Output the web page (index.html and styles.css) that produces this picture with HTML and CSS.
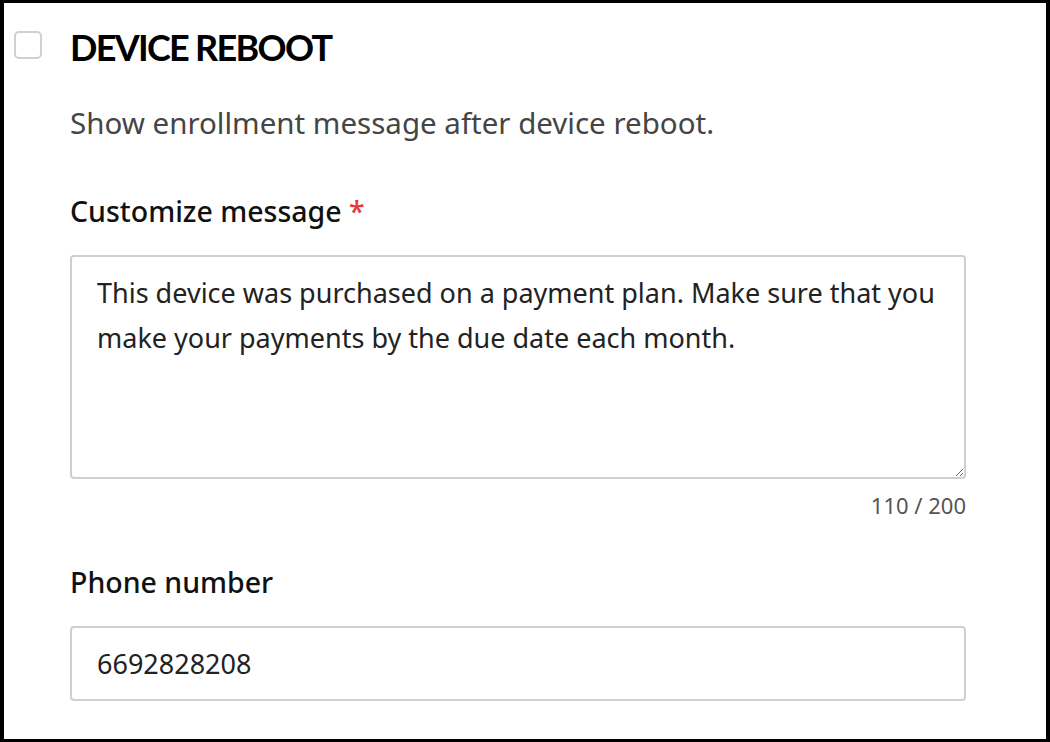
FILE: index.html
```html
<!DOCTYPE html>
<html lang="en">
<head>
<meta charset="utf-8">
<title>Device reboot</title>
<link rel="stylesheet" href="styles.css">
</head>
<body>
<div class="frame">
  <div class="header">
    <span class="checkbox"></span>
    <h1 class="title">DEVICE REBOOT</h1>
  </div>
  <div class="content">
    <p class="desc">Show enrollment message after device reboot.</p>
    <label class="label">Customize message <span class="req">*</span></label>
    <textarea class="textarea">This device was purchased on a payment plan. Make sure that you make your payments by the due date each month.</textarea>
    <div class="counter">110 / 200</div>
    <label class="label label-phone">Phone number</label>
    <input class="input" type="text" value="6692828208">
  </div>
</div>
</body>
</html>
```

FILE: styles.css
```css
html, body {
  margin: 0;
  padding: 0;
  background: #fff;
}
.frame {
  box-sizing: border-box;
  width: 1050px;
  height: 742px;
  border-style: solid;
  border-color: #000;
  border-width: 3px 4px 3px 4px;
  padding: 0 80px 0 10px;
  overflow: hidden;
  font-family: "Noto Sans", "Open Sans", sans-serif;
}
.header {
  display: flex;
  align-items: flex-start;
  gap: 28px;
  padding-top: 22px;
}
.checkbox {
  flex: none;
  box-sizing: border-box;
  width: 28px;
  height: 28px;
  margin-top: 6px;
  border: 2px solid #d0d0d0;
  border-radius: 5px;
  background: #fff;
}
.title {
  margin: 0;
  font-family: "Lato", sans-serif;
  font-weight: 700;
  font-size: 36px;
  line-height: 44px;
  color: #000;
  letter-spacing: -1.7px;
}
.content {
  display: flex;
  flex-direction: column;
  padding-left: 56px;
}
.desc {
  margin: 34px 0 0;
  font-size: 29.5px;
  line-height: 40px;
  color: #454545;
}
.label {
  margin-top: 50px;
  font-size: 28.5px;
  line-height: 36px;
  font-weight: 500;
  color: #111;
}
.req {
  color: #e8373a;
}
.textarea {
  box-sizing: border-box;
  margin-top: 26px;
  width: 896px;
  height: 224px;
  padding: 13px 25px;
  border: 2px solid #cfcfcf;
  border-radius: 4px;
  font-family: inherit;
  font-size: 27px;
  line-height: 45px;
  color: #222;
  resize: vertical;
  outline: none;
}
.counter {
  margin-top: 11px;
  text-align: right;
  font-size: 22px;
  line-height: 30px;
  color: #555;
}
.label-phone {
  margin-top: 44px;
}
.input {
  box-sizing: border-box;
  margin-top: 26px;
  width: 896px;
  height: 75px;
  padding: 0 25px;
  border: 2px solid #cfcfcf;
  border-radius: 4px;
  font-family: inherit;
  font-size: 27px;
  color: #222;
  outline: none;
}
```
